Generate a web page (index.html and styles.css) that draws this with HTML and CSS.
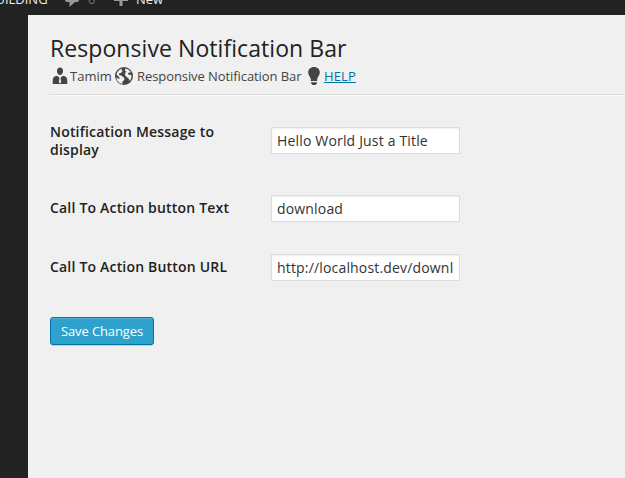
FILE: index.html
```html
<!DOCTYPE html>
<html lang="en">
<head>
<meta charset="utf-8">
<title>Responsive Notification Bar</title>
<link rel="stylesheet" href="styles.css">
</head>
<body>
<header class="adminbar">
  <span class="site">BUILDING</span>
  <svg class="comment" viewBox="0 0 14 13"><path d="M2 0h10q2 0 2 2v4q0 2-2 2h-2l-5.500 5V8H2Q0 8 0 6V2q0-2 2-2z"/></svg>
  <span class="count">0</span>
  <svg class="plus" viewBox="0 0 14 14"><path d="M5.500 0h3v6H14v3H8.500v5h-3V9H0V6h5.500z"/></svg>
  <span class="new">New</span>
</header>
<div class="shell">
  <nav class="menu"></nav>
  <main class="content">
    <h1>Responsive Notification Bar</h1>
    <div class="meta">
      <svg class="icon user" viewBox="0 0 20 20"><path d="M10 1.500c1.900 0 3 1.300 3 3.400S11.900 9 10 9 7 7 7 4.900s1.100-3.400 3-3.400z"/><path d="M7 9.800l3 2.200 3-2.200c3 .3 4.300 2 4.300 5V17q0 .9-1 .9H3.700q-1 0-1-.9v-2.200c0-3 1.300-4.700 4.300-5z"/><path class="cut" d="M9 11.600h2l-.4 1.400.6 3.300L10 17.600l-1.200-1.300.6-3.300z"/></svg>
      <span class="author">Tamim</span>
      <svg class="icon globe" viewBox="0 0 20 20"><circle cx="10" cy="10" r="9"/><path class="cut" d="M8.500 2.600L7.200 4l1.500 1-1.500 1.700-2 .8-.4 1.500 2.300.4 2.200 1.500 1.300 1.800-.8 1.700-1.500 1.300.2 2.200C4.500 17.300 2.300 14.500 2.200 11l1.300 1.600 2.300.2L4.700 10.500 2.500 8.800C3 5.700 5.300 3.100 8.500 2.600z"/><path class="cut" d="M11.500 2.400c2.500.5 4.600 2 5.600 4.200l-2-.2-1.400 1 1.200 1.400 2.600.2c.2 2.400-.5 4.400-2 6l-.7-2.300-1.800-1.500-2-1.900.2-2.300 1.200-1.500-1.600-.8z"/></svg>
      <span class="plugin">Responsive Notification Bar</span>
      <svg class="icon bulb" viewBox="0 0 20 20"><path d="M10 1c3.500 0 5.800 2.300 5.800 5.500 0 2.600-1.900 3.800-2.600 6.500H6.800C6.100 10.300 4.200 9.100 4.200 6.500 4.200 3.300 6.500 1 10 1z"/><path d="M6.800 13h6.400v2H6.800zM7 16.300h6v.9L11.500 19h-3L7 17.200z"/></svg>
      <a href="#">HELP</a>
    </div>
    <form class="fields">
      <label for="message">Notification Message to display</label>
      <input id="message" type="text" value="Hello World Just a Title">
      <label for="text">Call To Action button Text</label>
      <input id="text" type="text" value="download">
      <label for="url">Call To Action Button URL</label>
      <input id="url" type="text" value="http://localhost.dev/download">
    </form>
    <button type="button">Save Changes</button>
  </main>
</div>
</body>
</html>
```
FILE: styles.css
```css
* { box-sizing: border-box; }
body {
  margin: 0;
  height: 478px;
  overflow: hidden;
  background: #f0f0f0;
  color: #444;
  font: 13px/18px "Open Sans", sans-serif;
}
.adminbar {
  display: flex;
  align-items: flex-start;
  height: 15px;
  overflow: hidden;
  background: #222;
  color: #eee;
}
.adminbar span { margin-top: -10px; white-space: nowrap; }
.adminbar svg { flex: none; fill: #999; }
.adminbar .site { margin-left: -13px; width: 78px; }
.adminbar .comment { width: 14px; height: 13px; margin-top: -6px; }
.adminbar .count { margin-left: 9px; width: 26px; color: #777; }
.adminbar .plus { width: 14px; height: 14px; margin-top: -8px; }
.adminbar .new { margin-left: 8px; }
.shell { display: flex; height: 463px; }
.menu { flex: none; width: 28px; background: #222; }
.content { flex: 1; min-width: 0; padding: 19px 0 0 22px; }
h1 {
  margin: 0;
  color: #222;
  font-size: 23px;
  font-weight: 400;
  line-height: 29px;
  letter-spacing: .07px;
}
.meta {
  display: flex;
  align-items: center;
  height: 32px;
  padding-bottom: 5px;
  border-bottom: 1px solid #dadada;
  box-shadow: 0 1px 0 #f9f9f9;
  white-space: nowrap;
}
.icon { flex: none; width: 20px; height: 20px; fill: #444; }
.cut { fill: #f0f0f0; }
.author { width: 44px; }
.plugin { margin-left: 3px; width: 167px; letter-spacing: -.08px; }
.meta a { color: #0074a2; letter-spacing: .15px; }
.fields {
  display: grid;
  grid-template-columns: 221px 189px;
  grid-template-rows: 68px 59px 59px;
  margin-top: 28px;
}
label {
  width: 190px;
  color: #222;
  font-size: 14px;
  font-weight: 600;
  line-height: 18px;
  letter-spacing: .19px;
}
input {
  width: 189px;
  height: 27px;
  margin: 4px 0 0;
  padding: 3px 5px;
  border: 1px solid #ddd;
  border-radius: 0;
  outline: 0;
  background: #fff;
  box-shadow: inset 0 1px 2px rgba(0, 0, 0, .07);
  color: #333;
  font: 14px/19px "Open Sans", sans-serif;
  letter-spacing: .17px;
}
label:not(:first-child) { padding-top: 8px; }
button {
  display: block;
  width: 104px;
  height: 28px;
  margin: 8px 0 0;
  padding: 0;
  border: 1px solid #0074a2;
  border-radius: 3px;
  background: #2ea2cc;
  box-shadow: inset 0 1px 0 rgba(120, 200, 230, .5), 0 1px 0 rgba(0, 0, 0, .15);
  color: #fff;
  font: 13px/26px "Open Sans", sans-serif;
  letter-spacing: -.1px;
}
```
